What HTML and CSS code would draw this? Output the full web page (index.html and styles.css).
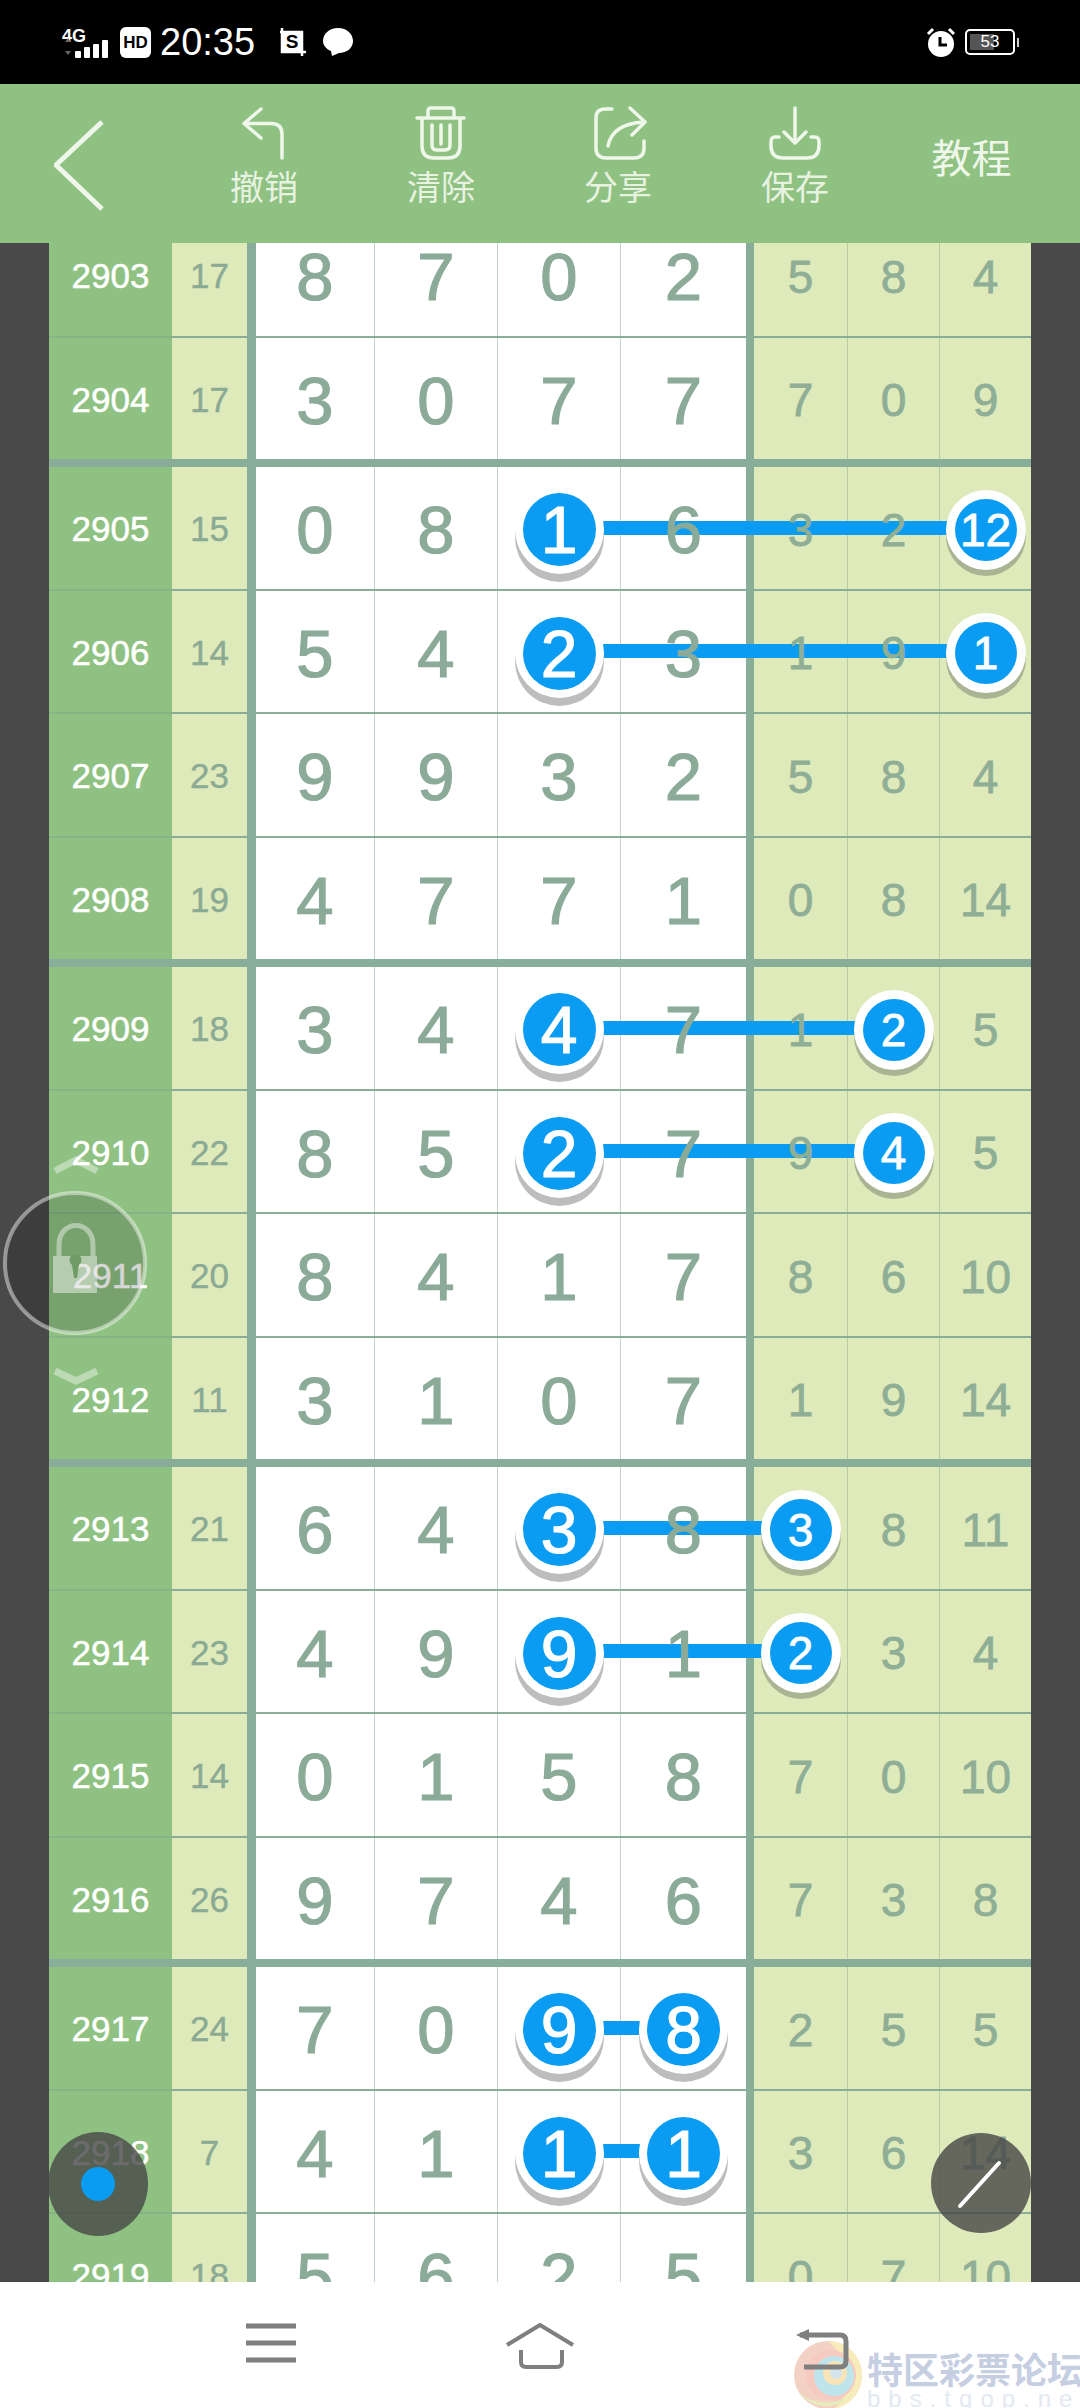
FILE: index.html
```html
<!DOCTYPE html>
<html lang="zh">
<head>
<meta charset="utf-8">
<title>走势图</title>
<link rel="stylesheet" href="styles.css">
</head>
<body>
<div class="app">
  <header class="statusbar">
    <div class="status-left">
      <div class="signal">
        <span class="net">4G</span>
        <svg class="bars" width="50" height="24" viewBox="0 0 50 24"><path class="arrows" d="M3 6 L6 2 L9 6 Z M3 15 L6 19 L9 15 Z"/><rect x="13" y="15" width="6" height="7" rx="1"/><rect x="22" y="11" width="6" height="11" rx="1"/><rect x="31" y="8" width="6" height="14" rx="1"/><rect x="40" y="4" width="6" height="18" rx="1"/></svg>
      </div>
      <span class="hd">HD</span>
      <span class="time">20:35</span>
      <span class="shot"><svg width="30" height="32" viewBox="0 0 30 32"><path class="shot-frame" d="M4 2 V6 H24 V26 H28 M2 6 H4 V26 H24 V30"/><rect x="4" y="6" width="20" height="20"/></svg><b class="shot-s">S</b></span>
      <svg class="chat" width="30" height="30" viewBox="0 0 30 30"><path d="M15 1 C24 1 30 7 30 14 C30 21 24 26 16 26 L9 29 L8 24 C3 22 0 18 0 14 C0 7 6 1 15 1 Z"/></svg>
    </div>
    <div class="status-right">
      <svg class="alarm" width="32" height="32" viewBox="0 0 32 32"><circle cx="16" cy="18" r="13" class="alarm-face"/><path class="alarm-ears" d="M3 8 L8 3 M29 8 L24 3"/><path class="alarm-hand" d="M15 11 V19 H22"/></svg>
      <div class="battery"><span class="battery-fill"></span><span class="battery-text">53</span></div>
      <span class="battery-nub"></span>
    </div>
  </header>

  <nav class="toolbar">
    <div class="back">
      <svg width="60" height="100" viewBox="0 0 60 100"><path d="M48 4 L2 47 L48 91"/></svg>
    </div>
    <div class="tool">
      <svg width="60" height="54" viewBox="0 0 60 54"><path d="M27 3 L10 17.5 L27 32 M10 17.5 H37 Q48 17.5 48 28 V52"/></svg>
      <span class="tool-label">撤销</span>
    </div>
    <div class="tool">
      <svg width="60" height="54" viewBox="0 0 60 54"><path d="M6 12 H53 M17 12 V5 Q17 2 20 2 H40 Q43 2 43 5 V12 M11 12 V40 Q11 52 23 52 H37 Q49 52 49 40 V12 M21 19 V39 Q21 44 26 44 H34 Q39 44 39 39 V19 M30 19 V38"/></svg>
      <span class="tool-label">清除</span>
    </div>
    <div class="tool">
      <svg width="60" height="54" viewBox="0 0 60 54"><path d="M24 3 H17 Q8 3 8 12 V42 Q8 52 18 52 H46 Q56 52 56 42 V35 M42 2 L57 16 L44 29 M20 40 Q24 18 56 16"/></svg>
      <span class="tool-label">分享</span>
    </div>
    <div class="tool">
      <svg width="60" height="54" viewBox="0 0 60 54"><path d="M30 2 V37 M19 26 L30 37 L41 26 M14 31 H10 Q6 31 6 36 V40 Q6 52 18 52 H42 Q54 52 54 40 V36 Q54 31 50 31 H46"/></svg>
      <span class="tool-label">保存</span>
    </div>
    <div class="tutorial">教程</div>
  </nav>

  <main class="chart">
    <div class="table">
      <section class="group group-first">
        <div class="row"><div class="num">2903</div><div class="sum">17</div><div class="d d1"><span>8</span></div><div class="d"><span>7</span></div><div class="d"><span>0</span></div><div class="d d4"><span>2</span></div><div class="s s1"><span>5</span></div><div class="s"><span>8</span></div><div class="s"><span>4</span></div></div>
        <div class="row"><div class="num">2904</div><div class="sum">17</div><div class="d d1"><span>3</span></div><div class="d"><span>0</span></div><div class="d"><span>7</span></div><div class="d d4"><span>7</span></div><div class="s s1"><span>7</span></div><div class="s"><span>0</span></div><div class="s"><span>9</span></div></div>
      </section>
      <section class="group">
        <div class="row"><i class="link link-c9"></i><div class="num">2905</div><div class="sum">15</div><div class="d d1"><span>0</span></div><div class="d"><span>8</span></div><div class="d"><b class="ball">1</b></div><div class="d d4"><span>6</span></div><div class="s s1"><span>3</span></div><div class="s"><span>2</span></div><div class="s"><b class="ball ball-sm">12</b></div></div>
        <div class="row"><i class="link link-c9"></i><div class="num">2906</div><div class="sum">14</div><div class="d d1"><span>5</span></div><div class="d"><span>4</span></div><div class="d"><b class="ball">2</b></div><div class="d d4"><span>3</span></div><div class="s s1"><span>1</span></div><div class="s"><span>9</span></div><div class="s"><b class="ball ball-sm">1</b></div></div>
        <div class="row"><div class="num">2907</div><div class="sum">23</div><div class="d d1"><span>9</span></div><div class="d"><span>9</span></div><div class="d"><span>3</span></div><div class="d d4"><span>2</span></div><div class="s s1"><span>5</span></div><div class="s"><span>8</span></div><div class="s"><span>4</span></div></div>
        <div class="row"><div class="num">2908</div><div class="sum">19</div><div class="d d1"><span>4</span></div><div class="d"><span>7</span></div><div class="d"><span>7</span></div><div class="d d4"><span>1</span></div><div class="s s1"><span>0</span></div><div class="s"><span>8</span></div><div class="s"><span>14</span></div></div>
      </section>
      <section class="group">
        <div class="row"><i class="link link-c8"></i><div class="num">2909</div><div class="sum">18</div><div class="d d1"><span>3</span></div><div class="d"><span>4</span></div><div class="d"><b class="ball">4</b></div><div class="d d4"><span>7</span></div><div class="s s1"><span>1</span></div><div class="s"><b class="ball ball-sm">2</b></div><div class="s"><span>5</span></div></div>
        <div class="row"><i class="link link-c8"></i><div class="num">2910</div><div class="sum">22</div><div class="d d1"><span>8</span></div><div class="d"><span>5</span></div><div class="d"><b class="ball">2</b></div><div class="d d4"><span>7</span></div><div class="s s1"><span>9</span></div><div class="s"><b class="ball ball-sm">4</b></div><div class="s"><span>5</span></div></div>
        <div class="row"><div class="num">2911</div><div class="sum">20</div><div class="d d1"><span>8</span></div><div class="d"><span>4</span></div><div class="d"><span>1</span></div><div class="d d4"><span>7</span></div><div class="s s1"><span>8</span></div><div class="s"><span>6</span></div><div class="s"><span>10</span></div></div>
        <div class="row"><div class="num">2912</div><div class="sum">11</div><div class="d d1"><span>3</span></div><div class="d"><span>1</span></div><div class="d"><span>0</span></div><div class="d d4"><span>7</span></div><div class="s s1"><span>1</span></div><div class="s"><span>9</span></div><div class="s"><span>14</span></div></div>
      </section>
      <section class="group">
        <div class="row"><i class="link link-c7"></i><div class="num">2913</div><div class="sum">21</div><div class="d d1"><span>6</span></div><div class="d"><span>4</span></div><div class="d"><b class="ball">3</b></div><div class="d d4"><span>8</span></div><div class="s s1"><b class="ball ball-sm">3</b></div><div class="s"><span>8</span></div><div class="s"><span>11</span></div></div>
        <div class="row"><i class="link link-c7"></i><div class="num">2914</div><div class="sum">23</div><div class="d d1"><span>4</span></div><div class="d"><span>9</span></div><div class="d"><b class="ball">9</b></div><div class="d d4"><span>1</span></div><div class="s s1"><b class="ball ball-sm">2</b></div><div class="s"><span>3</span></div><div class="s"><span>4</span></div></div>
        <div class="row"><div class="num">2915</div><div class="sum">14</div><div class="d d1"><span>0</span></div><div class="d"><span>1</span></div><div class="d"><span>5</span></div><div class="d d4"><span>8</span></div><div class="s s1"><span>7</span></div><div class="s"><span>0</span></div><div class="s"><span>10</span></div></div>
        <div class="row"><div class="num">2916</div><div class="sum">26</div><div class="d d1"><span>9</span></div><div class="d"><span>7</span></div><div class="d"><span>4</span></div><div class="d d4"><span>6</span></div><div class="s s1"><span>7</span></div><div class="s"><span>3</span></div><div class="s"><span>8</span></div></div>
      </section>
      <section class="group">
        <div class="row"><i class="link link-c4"></i><div class="num">2917</div><div class="sum">24</div><div class="d d1"><span>7</span></div><div class="d"><span>0</span></div><div class="d"><b class="ball">9</b></div><div class="d d4"><b class="ball">8</b></div><div class="s s1"><span>2</span></div><div class="s"><span>5</span></div><div class="s"><span>5</span></div></div>
        <div class="row"><i class="link link-c4"></i><div class="num">2918</div><div class="sum">7</div><div class="d d1"><span>4</span></div><div class="d"><span>1</span></div><div class="d"><b class="ball">1</b></div><div class="d d4"><b class="ball">1</b></div><div class="s s1"><span>3</span></div><div class="s"><span>6</span></div><div class="s"><span>14</span></div></div>
        <div class="row"><div class="num">2919</div><div class="sum">18</div><div class="d d1"><span>5</span></div><div class="d"><span>6</span></div><div class="d"><span>2</span></div><div class="d d4"><span>5</span></div><div class="s s1"><span>0</span></div><div class="s"><span>7</span></div><div class="s"><span>10</span></div></div>
      </section>
    </div>

    <div class="lock">
      <svg width="150" height="240" viewBox="0 0 150 240">
        <path class="lock-chevron" d="M55 28 L76 17 L97 28 M55 228 L76 238 L97 228"/>
        <circle class="lock-ring" cx="75" cy="120" r="70"/>
        <path class="lock-shackle" d="M59 113 V102 C59 76 93 76 93 102 V113"/>
        <rect class="lock-body" x="53" y="113" width="44" height="37"/>
        <path class="lock-key" d="M72 122 a6 6 0 1 1 7 0 L77 135 H74 Z"/>
      </svg>
    </div>
    <div class="fab fab-pen"><span class="fab-dot"></span></div>
    <div class="fab fab-line"><svg width="100" height="100" viewBox="0 0 100 100"><path d="M68 30 L29 73"/></svg></div>
  </main>

  <footer class="navbar">
    <div class="watermark">
      <svg class="wm-logo" width="70" height="70" viewBox="0 0 70 70">
        <circle cx="35" cy="35" r="34" fill="#efc3b2"/>
        <path d="M35 1 A34 34 0 0 1 69 35 A34 34 0 0 1 40 69 C58 58 60 20 35 1 Z" fill="#f6e6a4"/>
        <circle cx="38" cy="35" r="25" fill="#f3b9ad"/>
        <circle cx="41" cy="36" r="20" fill="#a9dde6"/>
        <circle cx="42" cy="33" r="12" fill="#f7dca0"/>
        <circle cx="43" cy="33" r="6" fill="#c9dde8"/>
        <path d="M6 52 C20 66 48 66 60 52 C50 70 20 72 6 52 Z" fill="#dfe6a8"/>
      </svg>
      <div class="wm-text">
        <span class="wm-cn">特区彩票论坛</span>
        <span class="wm-en">bbs.tqop.net</span>
      </div>
    </div>
    <svg width="60" height="46" viewBox="0 0 60 46" class="nav-menu"><path d="M5 5 H55 M5 22 H55 M5 39 H55"/></svg>
    <svg width="72" height="46" viewBox="0 0 72 46" class="nav-home"><path d="M2 22 L35 2 L68 22 M16 27 V39 Q16 44 21 44 H52 Q57 44 57 39 V27"/></svg>
    <svg width="56" height="40" viewBox="0 0 56 40" class="nav-back"><path d="M6 6 H46 Q52 6 52 12 V32 Q52 38 46 38 H10"/><path class="nav-back-head" d="M2 6 L15 0 V12 Z"/></svg>
  </footer>
</div>
</body>
</html>
```

FILE: styles.css
```css
* { box-sizing: border-box; }

html, body {
  margin: 0;
  padding: 0;
  background: #000;
}

.app {
  position: relative;
  width: 1080px;
  height: 2408px;
  display: flex;
  flex-direction: column;
  overflow: hidden;
  font-family: "Liberation Sans", Arial, sans-serif;
}

/* status bar */
.statusbar {
  flex: 0 0 84px;
  background: #000;
  color: #fff;
  display: flex;
  justify-content: space-between;
  align-items: center;
  padding: 0 62px 0 62px;
}

.status-left, .status-right {
  display: flex;
  align-items: center;
}

.signal {
  width: 48px;
  height: 32px;
  display: flex;
  flex-direction: column;
  margin-top: 6px;
}

.net {
  font-size: 18px;
  font-weight: 700;
  line-height: 15px;
}

.bars { fill: #fff; margin-top: -8px; }
.bars .arrows { fill: #666; }

.hd {
  width: 31px;
  height: 31px;
  margin-left: 10px;
  border-radius: 6px;
  background: #fff;
  color: #000;
  font-size: 17px;
  font-weight: 700;
  text-align: center;
  line-height: 31px;
}

.time {
  margin-left: 9px;
  font-size: 38px;
  line-height: 44px;
}

.shot {
  position: relative;
  width: 30px;
  height: 32px;
  margin-left: 23px;
}

.shot svg { display: block; fill: #fff; }
.shot-frame { fill: none; stroke: #fff; stroke-width: 2.5; }

.shot-s {
  position: absolute;
  left: 4px;
  top: 6px;
  width: 20px;
  text-align: center;
  color: #000;
  font-size: 19px;
  line-height: 20px;
}

.chat { margin-left: 15px; fill: #fff; }

.status-right { margin-right: -1px; }

.alarm { margin-right: 8px; }
.alarm-face { fill: #fff; }
.alarm-ears { fill: none; stroke: #fff; stroke-width: 3; }
.alarm-hand { fill: none; stroke: #000; stroke-width: 3; }

.battery {
  position: relative;
  width: 50px;
  height: 26px;
  border: 2px solid #fff;
  border-radius: 5px;
  padding: 3px;
}

.battery-fill {
  display: block;
  width: 24px;
  height: 100%;
  background: #555;
}

.battery-text {
  position: absolute;
  left: 0;
  right: 0;
  top: 2px;
  text-align: center;
  font-size: 17px;
  line-height: 18px;
}

.battery-nub {
  width: 2px;
  height: 9px;
  margin-left: 2px;
  background: #ccc;
}

/* toolbar */
.toolbar {
  flex: 0 0 159px;
  background: #8fc182;
  color: #eff7ea;
  display: grid;
  grid-template-columns: repeat(6, 177px);
  font-family: "Noto Sans CJK SC", "Liberation Sans", sans-serif;
}

.toolbar svg {
  display: block;
  fill: none;
  stroke: #eff7ea;
  stroke-width: 3.5;
  stroke-linecap: round;
  stroke-linejoin: round;
}

.back { padding: 34px 0 0 54px; }
.back svg { stroke-width: 5; stroke-linecap: butt; }

.tool {
  display: flex;
  flex-direction: column;
  align-items: center;
  padding-top: 22px;
  padding-right: 3px;
}

.tool-label {
  margin-top: 3px;
  font-size: 34px;
  line-height: 46px;
  opacity: .92;
}

.tutorial {
  align-self: center;
  margin-top: -16px;
  padding-right: 4px;
  text-align: center;
  font-size: 40px;
  line-height: 50px;
}

/* chart */
.chart {
  position: relative;
  flex: 0 0 2039px;
  background: #4a4949;
  overflow: hidden;
}

.table {
  width: 982px;
  margin: -29px 49px 0;
  background: #88ad98;
  display: flex;
  flex-direction: column;
  gap: 8px;
}

.group {
  display: flex;
  flex-direction: column;
  gap: 2px;
}

.row {
  position: relative;
  height: 121.5px;
  display: grid;
  grid-template-columns: 123px 84px 118px 123px 123px 134px 93px 92px 92px;
}

.row + .row .num { box-shadow: 0 -2px 0 #85b486; }

.num, .sum, .d, .s {
  display: flex;
  align-items: center;
  justify-content: center;
}

.num {
  background: #8fc182;
  color: #fff;
  font-size: 35px;
  padding-top: 3px;
  -webkit-text-stroke: .5px #fff;
}

.sum {
  background: #dfeabb;
  border-right: 9px solid #88ad98;
  color: #8aaa94;
  font-size: 35px;
  padding-top: 3px;
  -webkit-text-stroke: .4px #8aaa94;
}

.d {
  background: #fff;
  border-left: 1px solid #c4d2ca;
  color: #8bab98;
  font-size: 67px;
  -webkit-text-stroke: 1.2px #8bab98;
}

.d1 { border-left: 0; }
.d4 { border-right: 8px solid #88ad98; }

.s {
  background: #dfeabb;
  border-left: 1px solid #b9cca6;
  color: #8fae96;
  font-size: 46px;
  -webkit-text-stroke: .8px #8fae96;
}

.s1 { border-left: 0; }

.d span, .s span {
  position: relative;
  z-index: 1;
  top: 2px;
}

.link {
  position: absolute;
  z-index: 0;
  top: calc(50% - 7px);
  left: 509px;
  height: 14px;
  background: #0a9cf2;
}

.link-c4 { width: 125px; }
.link-c7 { width: 242px; }
.link-c8 { width: 335px; }
.link-c9 { width: 427px; }

.ball {
  position: relative;
  z-index: 2;
  top: 2px;
  width: 73px;
  height: 73px;
  border-radius: 50%;
  background: #0a9cf2;
  color: #fff;
  font-weight: 400;
  font-size: 66px;
  line-height: 75px;
  text-align: center;
  -webkit-text-stroke: 1.2px #fff;
  box-shadow: 0 0 0 8px #fff, 0 8px 0 8px #bdbdbd;
}

.ball-sm {
  width: 62px;
  height: 62px;
  font-size: 46px;
  line-height: 63px;
  -webkit-text-stroke: .8px #fff;
  box-shadow: 0 0 0 9px #fff, 0 6px 0 9px #a9b493;
}

/* floating overlays */
.lock {
  position: absolute;
  z-index: 5;
  left: 0;
  top: 900px;
}

.lock svg { display: block; overflow: visible; }
.lock-chevron { fill: none; stroke: rgba(255,255,255,.4); stroke-width: 7; }
.lock-ring { fill: rgba(0,0,0,.16); stroke: rgba(255,255,255,.45); stroke-width: 4; }
.lock-shackle { fill: none; stroke: rgba(255,255,255,.42); stroke-width: 5; }
.lock-body { fill: rgba(255,255,255,.45); }
.lock-key { fill: #6f9c66; }

.fab {
  position: absolute;
  z-index: 5;
  width: 100px;
  height: 100px;
  border-radius: 50%;
  background: rgba(70,70,70,.8);
}

.fab-pen {
  left: 48px;
  top: 1889px;
  height: 104px;
  display: flex;
  align-items: center;
  justify-content: center;
}

.fab-dot {
  width: 34px;
  height: 34px;
  border-radius: 50%;
  background: #0a9cf2;
}

.fab-line { left: 931px; top: 1890px; }
.fab-line svg { display: block; fill: none; stroke: #fff; stroke-width: 4; stroke-linecap: round; }

/* bottom nav */
.navbar {
  flex: 1;
  background: #fff;
  position: relative;
  padding: 39px 0 0 241px;
  display: flex;
  align-items: flex-start;
}

.navbar svg { display: block; fill: none; stroke: #7f7f7f; stroke-width: 5; stroke-linejoin: round; }
.nav-menu, .nav-home, .nav-back { position: relative; z-index: 1; }
.navbar .nav-home { margin-left: 204px; margin-top: 2px; stroke-width: 4; }
.nav-back { margin-left: 217px; margin-top: 8px; overflow: visible; }
.navbar .nav-back-head { fill: #7f7f7f; stroke: none; }

.watermark {
  position: absolute;
  left: 793px;
  top: 58px;
  display: flex;
  gap: 4px;
}

.navbar .wm-logo { flex: none; opacity: .75; stroke: none; }

.wm-text {
  display: flex;
  flex-direction: column;
  padding-top: 9px;
  white-space: nowrap;
}

.wm-cn {
  font-family: "Noto Sans CJK SC", sans-serif;
  font-size: 36px;
  line-height: 38px;
  font-weight: 700;
  color: #c6cee1;
}

.wm-en {
  font-size: 24px;
  line-height: 24px;
  letter-spacing: 8px;
  color: #e4e8f1;
}
```
